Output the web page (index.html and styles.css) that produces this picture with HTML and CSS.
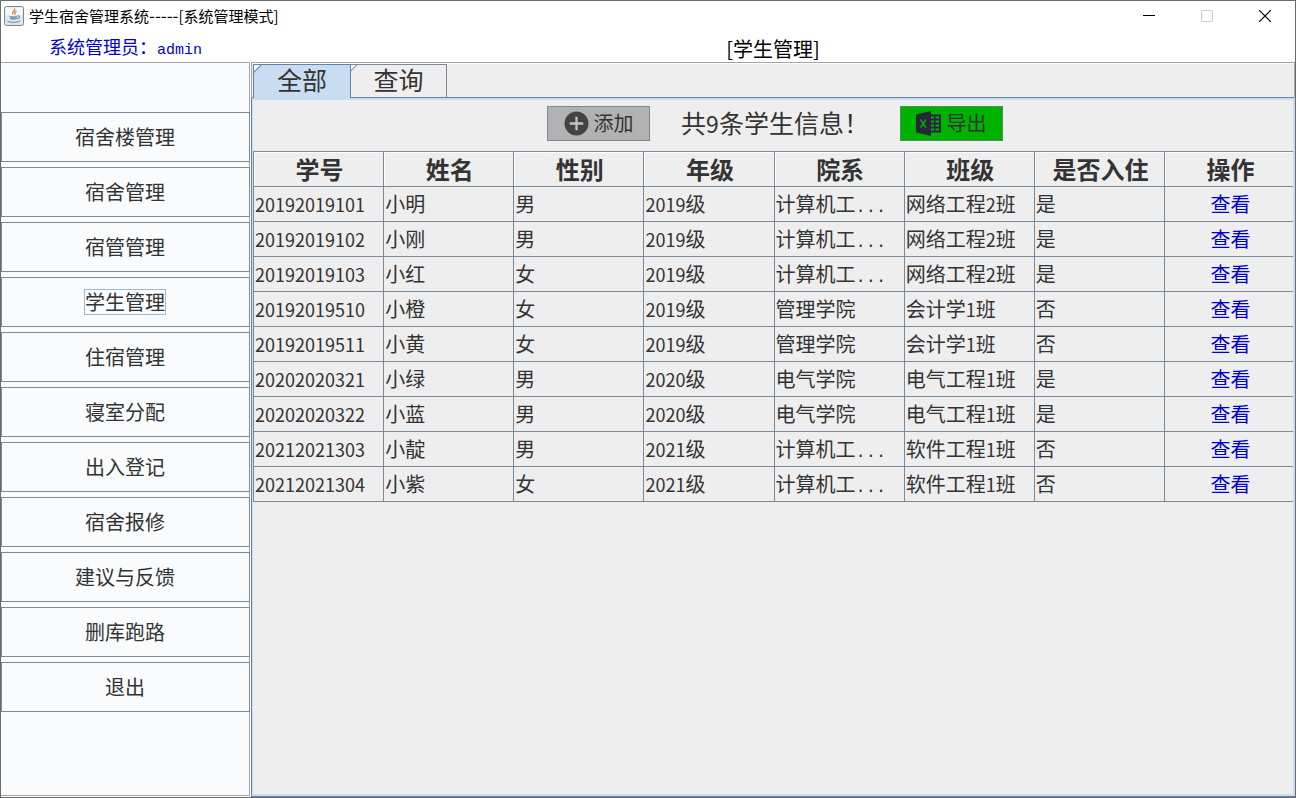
FILE: index.html
```html
<!DOCTYPE html>
<html lang="zh-CN">
<head>
<meta charset="utf-8">
<title>学生宿舍管理系统</title>
<link rel="stylesheet" href="styles.css">
</head>
<body>
<div class="window">
  <header class="titlebar">
    <svg class="app-icon" viewBox="0 0 20 20" aria-hidden="true">
      <rect x=".5" y=".5" width="19" height="19" rx="2" fill="#dfe7ee" stroke="#71879a"/>
      <rect x="1.5" y="1.5" width="17" height="8" rx="1" fill="#f5f8fa"/>
      <path d="M10.500 2.500c1.500 2-3.500 3-1.500 5.500M12.500 5c-2 1-2.500 2-1.200 3.800" fill="none" stroke="#e08a45" stroke-width="1.500"/>
      <path d="M5.500 9.500c1 1 7 1 8 0l-.8 3.500c-1 1-5.500 1-6.500 0z" fill="#7f9db5"/>
      <path d="M13.500 9.800c3-.5 2.500 2.500-.5 3M4 14.800c-1 2 11 2 12 0" fill="none" stroke="#7f9db5" stroke-width="1.300"/>
    </svg>
    <h1 class="app-title">学生宿舍管理系统<span class="dashes">-----</span>[系统管理模式]</h1>
    <div class="window-controls">
      <button class="control" type="button" aria-label="最小化"><svg viewBox="0 0 12 12"><path d="M0 5.500h12" stroke="#000"/></svg></button>
      <button class="control" type="button" aria-label="最大化" disabled><svg viewBox="0 0 12 12"><path d="M.5.5h11v11H.5z" fill="none" stroke="#ccc"/></svg></button>
      <button class="control" type="button" aria-label="关闭"><svg viewBox="0 0 12 12"><path d="M0 0l12 12M12 0L0 12" stroke="#000" stroke-width="1.200"/></svg></button>
    </div>
  </header>
  <div class="infobar">
    <p class="account">系统管理员：<span class="account-name">admin</span></p>
    <h2 class="page-name">[学生管理]</h2>
  </div>
  <div class="main">
    <nav class="sidebar">
      <button class="nav-item" type="button"><span class="nav-label">宿舍楼管理</span></button>
      <button class="nav-item" type="button"><span class="nav-label">宿舍管理</span></button>
      <button class="nav-item" type="button"><span class="nav-label">宿管管理</span></button>
      <button class="nav-item" type="button" aria-current="page"><span class="nav-label nav-label-focus">学生管理</span></button>
      <button class="nav-item" type="button"><span class="nav-label">住宿管理</span></button>
      <button class="nav-item" type="button"><span class="nav-label">寝室分配</span></button>
      <button class="nav-item" type="button"><span class="nav-label">出入登记</span></button>
      <button class="nav-item" type="button"><span class="nav-label">宿舍报修</span></button>
      <button class="nav-item" type="button"><span class="nav-label">建议与反馈</span></button>
      <button class="nav-item" type="button"><span class="nav-label">删库跑路</span></button>
      <button class="nav-item" type="button"><span class="nav-label">退出</span></button>
    </nav>
    <main class="content">
      <div class="tabs" role="tablist">
        <button class="tab tab-active" type="button" role="tab" aria-selected="true">全部</button>
        <button class="tab" type="button" role="tab" aria-selected="false">查询</button>
      </div>
      <section class="panel">
        <div class="toolbar">
          <button class="action action-add" type="button">
            <svg class="action-icon" viewBox="0 0 24 24" aria-hidden="true"><circle cx="12" cy="12" r="11.500" fill="#434343"/><path d="M12 5.500v13M5.500 12h13" stroke="#c4c4c4" stroke-width="2.200"/></svg>
            添加
          </button>
          <p class="summary">共<span class="summary-count">9</span>条学生信息！</p>
          <button class="action action-export" type="button">
            <svg class="action-icon" viewBox="0 0 25 25" aria-hidden="true"><path d="M0 3.500L15 0v25L0 21.500z" fill="#26283a"/><path d="M15 3.500h10v18H15z" fill="#26283a"/><path d="M4.500 8.500l5.500 8M10 8.500l-5.500 8" stroke="#07a80b" stroke-width="1.500"/><path d="M15 6.500h3M19.500 6.500H23M15 10.500h3M19.500 10.500H23M15 14.500h3M19.500 14.500H23M15 18.500h3M19.500 18.500H23" stroke="#07a80b" stroke-width="2"/></svg>
            导出
          </button>
        </div>
        <table class="students">
          <colgroup><col><col><col><col><col><col><col><col class="col-action"></colgroup>
          <thead>
            <tr><th>学号</th><th>姓名</th><th>性别</th><th>年级</th><th>院系</th><th>班级</th><th>是否入住</th><th>操作</th></tr>
          </thead>
          <tbody>
            <tr><td><span class="num">20192019101</span></td><td>小明</td><td>男</td><td><span class="num">2019</span>级</td><td>计算机工<span class="dots">...</span></td><td>网络工程<span class="num">2</span>班</td><td>是</td><td><a class="view" href="#">查看</a></td></tr>
            <tr><td><span class="num">20192019102</span></td><td>小刚</td><td>男</td><td><span class="num">2019</span>级</td><td>计算机工<span class="dots">...</span></td><td>网络工程<span class="num">2</span>班</td><td>是</td><td><a class="view" href="#">查看</a></td></tr>
            <tr><td><span class="num">20192019103</span></td><td>小红</td><td>女</td><td><span class="num">2019</span>级</td><td>计算机工<span class="dots">...</span></td><td>网络工程<span class="num">2</span>班</td><td>是</td><td><a class="view" href="#">查看</a></td></tr>
            <tr><td><span class="num">20192019510</span></td><td>小橙</td><td>女</td><td><span class="num">2019</span>级</td><td>管理学院</td><td>会计学<span class="num">1</span>班</td><td>否</td><td><a class="view" href="#">查看</a></td></tr>
            <tr><td><span class="num">20192019511</span></td><td>小黄</td><td>女</td><td><span class="num">2019</span>级</td><td>管理学院</td><td>会计学<span class="num">1</span>班</td><td>否</td><td><a class="view" href="#">查看</a></td></tr>
            <tr><td><span class="num">20202020321</span></td><td>小绿</td><td>男</td><td><span class="num">2020</span>级</td><td>电气学院</td><td>电气工程<span class="num">1</span>班</td><td>是</td><td><a class="view" href="#">查看</a></td></tr>
            <tr><td><span class="num">20202020322</span></td><td>小蓝</td><td>男</td><td><span class="num">2020</span>级</td><td>电气学院</td><td>电气工程<span class="num">1</span>班</td><td>是</td><td><a class="view" href="#">查看</a></td></tr>
            <tr><td><span class="num">20212021303</span></td><td>小靛</td><td>男</td><td><span class="num">2021</span>级</td><td>计算机工<span class="dots">...</span></td><td>软件工程<span class="num">1</span>班</td><td>否</td><td><a class="view" href="#">查看</a></td></tr>
            <tr><td><span class="num">20212021304</span></td><td>小紫</td><td>女</td><td><span class="num">2021</span>级</td><td>计算机工<span class="dots">...</span></td><td>软件工程<span class="num">1</span>班</td><td>否</td><td><a class="view" href="#">查看</a></td></tr>
          </tbody>
        </table>
      </section>
    </main>
  </div>
</div>
</body>
</html>
```
FILE: styles.css
```css
:root {
  --line: #7a8a99;
  --frame: #6b6b6e;
  --edge: #a3a5a6;
  --accent: #6382a5;
  --pale: #c8ddf2;
  --surface: #eee;
  --text: #333;
  --link: #0000cd;
}

* {
  box-sizing: border-box;
}

body {
  margin: 0;
  color: var(--text);
  font-family: "Noto Sans CJK SC", sans-serif;
  font-size: 20px;
}

button {
  margin: 0;
  padding: 0;
  color: inherit;
  font: inherit;
}

h1,
h2,
p {
  margin: 0;
  font-weight: 400;
}

.window {
  display: flex;
  flex-direction: column;
  min-height: 100vh;
  border: 1px solid var(--frame);
  background: #fff;
}

.titlebar {
  display: flex;
  align-items: center;
  height: 30px;
  padding: 0 1px 0 3px;
}

.app-icon {
  width: 20px;
  height: 20px;
}

.app-title {
  margin-left: 5px;
  color: #000;
  font-size: 15px;
  line-height: 30px;
}

.dashes {
  font-size: 17px;
  line-height: 20px;
}

.window-controls {
  display: flex;
  margin-left: auto;
}

.control {
  display: grid;
  place-items: center;
  width: 58px;
  height: 30px;
  border: 0;
  background: none;
}

.control svg {
  width: 12px;
  height: 12px;
}

.infobar {
  display: grid;
  grid-template-columns: 250px 1fr;
  align-items: center;
  height: 31px;
}

.account {
  padding-left: 48px;
  color: var(--link);
  font-size: 18px;
  line-height: 30px;
  white-space: nowrap;
}

.account-name {
  font-family: "Liberation Mono", monospace;
  font-size: 15px;
}

.page-name {
  color: #000;
  font-size: 20px;
  line-height: 30px;
  text-align: center;
}

.main {
  display: grid;
  flex: 1;
  grid-template-columns: 249px 1fr;
  gap: 1px;
}

.sidebar {
  display: flex;
  flex-direction: column;
  gap: 5px;
  margin-bottom: 1px;
  padding-top: 49px;
  border: 1px solid var(--edge);
  border-left: 0;
  background: #f9fbfd;
}

.nav-item {
  height: 50px;
  margin-right: -1px;
  padding: 0 1px 2px 0;
  border: 1px solid var(--line);
  background: #f9fbfd;
}

.nav-label {
  display: inline-block;
  border: 1px solid transparent;
  line-height: 24px;
}

.nav-label-focus {
  border-color: #a3b8cc;
}

.content {
  display: flex;
  flex-direction: column;
  min-width: 0;
  border: 1px solid var(--edge);
  border-bottom: 0;
  background: var(--surface);
}

.tabs {
  display: flex;
  height: 35px;
  padding: 1px 1px 0;
  border-bottom: 1px solid var(--accent);
  box-shadow: inset 0 1px #fff;
}

.tab {
  width: 96px;
  height: 33px;
  padding-bottom: 4px;
  border: 1px solid var(--line);
  border-width: 1px 1px 0 0;
  background: linear-gradient(135deg, #fff 3px, var(--line) 4px, var(--surface) 5px);
  font-size: 25px;
  line-height: 28px;
}

.tab-active {
  width: 98px;
  height: 36px;
  padding-bottom: 7px;
  border: 1px solid var(--accent);
  border-bottom: 0;
  background: linear-gradient(135deg, #fff 4px, var(--accent) 5px, var(--pale) 6px);
}

.panel {
  flex: 1;
  margin: 0 -1px;
  padding-top: 1px;
  border: solid var(--accent);
  border-width: 0 0 1px 1px;
  box-shadow: inset 0 2px var(--pale), inset -2px -2px var(--pale), inset 1px 0 var(--pale);
}

.toolbar {
  display: flex;
  justify-content: center;
  gap: 31px;
  padding: 7px 0 10px 3px;
}

.action {
  display: flex;
  align-items: center;
  justify-content: center;
  gap: 5px;
  width: 103px;
  height: 35px;
  padding-bottom: 1px;
  border: 1px solid var(--line);
  line-height: 30px;
}

.action-add {
  background: #b2b2b2;
}

.action-export {
  border-color: #4f8b5e;
  background: #00b200;
}

.action-icon {
  width: 25px;
  height: 25px;
}

.summary {
  font-size: 25px;
  line-height: 32px;
  white-space: nowrap;
}

.summary-count {
  font-size: 23px;
}

.students {
  width: calc(100% - 3px);
  margin-left: 1px;
  border-top: 1px solid var(--line);
  border-spacing: 0;
  border-left: 1px solid var(--line);
  table-layout: fixed;
}

.col-action {
  width: 128px;
}

.students th,
.students td {
  height: 35px;
  padding: 0 0 0 2px;
  overflow: hidden;
  border: solid var(--line);
  border-width: 0 1px 1px 0;
  line-height: 32px;
  white-space: nowrap;
}

.students th {
  box-shadow: inset 1px 1px #fff;
  font-size: 24px;
  font-weight: 700;
}

.students td {
  padding-left: 1px;
}

.students th:last-child,
.students td:last-child {
  padding-left: 3px;
  border-right: 0;
}

.students td:last-child {
  text-align: center;
}

.num {
  font-size: 18px;
  line-height: 20px;
}

.dots {
  font-family: "Liberation Mono", monospace;
  font-size: 17px;
  line-height: 20px;
}

.view {
  color: var(--link);
  text-decoration: none;
}
```
